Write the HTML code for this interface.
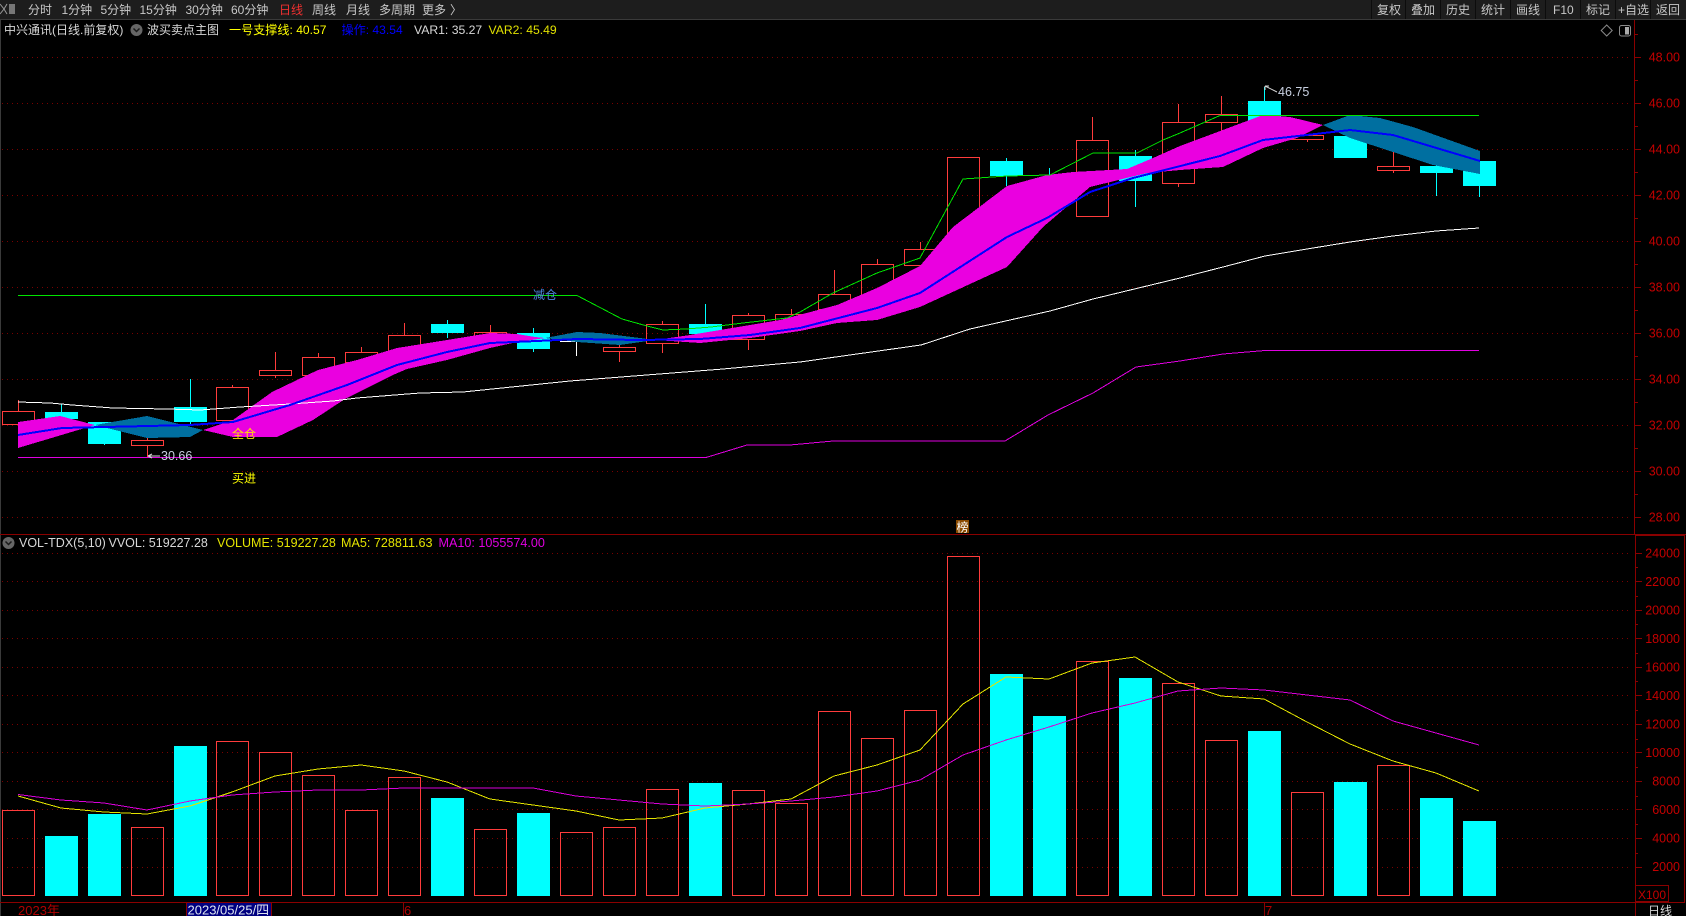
<!DOCTYPE html>
<html lang="zh">
<head>
<meta charset="utf-8">
<title>中兴通讯 日线</title>
<style>
html,body{margin:0;padding:0;background:#000;width:1686px;height:916px;overflow:hidden}
svg{display:block;position:absolute;left:0;top:0}
text{font-family:"Liberation Sans","Noto Sans CJK SC",sans-serif;font-size:12.5px;white-space:pre}
.m text{font-size:12px;fill:#c8c8c8}
.a text{fill:#c40000;text-anchor:end;font-size:12.5px}
</style>
</head>
<body>
<svg width="1686" height="916" viewBox="0 0 1686 916" xmlns="http://www.w3.org/2000/svg">
<rect width="1686" height="916" fill="#000"/>
<!-- top bar -->
<rect width="1686" height="19" fill="#1d1d1d"/>
<rect y="19" width="1686" height="1" fill="#3a3a3a"/>
<g shape-rendering="crispEdges" fill="#0c0c0c">
<rect x="1371" width="1" height="19"/><rect x="1405" width="1" height="19"/><rect x="1440" width="1" height="19"/><rect x="1475" width="1" height="19"/><rect x="1510" width="1" height="19"/><rect x="1545" width="1" height="19"/><rect x="1580" width="1" height="19"/><rect x="1615" width="1" height="19"/><rect x="1650" width="1" height="19"/>
</g>
<path d="M0 4l4 5-4 5M7 4l-3 5 3 5" fill="none" stroke="#999" stroke-width="1"/>
<rect x="9" y="4" width="6" height="10" fill="#777"/>
<g class="m">
<text x="28" y="14">分时</text>
<text x="61.500" y="14">1分钟</text>
<text x="100.500" y="14">5分钟</text>
<text x="139.500" y="14">15分钟</text>
<text x="185.500" y="14">30分钟</text>
<text x="231" y="14">60分钟</text>
<text x="279" y="14" style="fill:#f03030">日线</text>
<text x="312" y="14">周线</text>
<text x="346" y="14">月线</text>
<text x="379" y="14">多周期</text>
<text x="422" y="14">更多</text>
<text x="450" y="14">〉</text>
<text x="1377" y="14">复权</text>
<text x="1411" y="14">叠加</text>
<text x="1446" y="14">历史</text>
<text x="1481" y="14">统计</text>
<text x="1516" y="14">画线</text>
<text x="1553" y="14">F10</text>
<text x="1586" y="14">标记</text>
<text x="1618" y="14">+自选</text>
<text x="1656" y="14">返回</text>
</g>
<rect x="0" y="20" width="1" height="896" fill="#3a3a3a"/>

<!-- grid -->
<path shape-rendering="crispEdges" fill="none" stroke="#7a0000" stroke-dasharray="1 4" d="M2 57.5H1632M2 103.5H1632M2 149.5H1632M2 195.5H1632M2 241.5H1632M2 287.5H1632M2 333.5H1632M2 379.5H1632M2 425.5H1632M2 471.5H1632M2 517.5H1632M2 553.5H1632M2 581.5H1632M2 610.5H1632M2 638.5H1632M2 667.5H1632M2 695.5H1632M2 724.5H1632M2 752.5H1632M2 781.5H1632M2 809.5H1632M2 838.5H1632M2 867.5H1632"/>

<!-- frames and axes -->
<g shape-rendering="crispEdges" fill="#8a0000">
<rect x="1634" y="20" width="1" height="514"/>
<rect x="1635" y="534" width="1" height="368"/>
<rect x="0" y="534" width="1686" height="1"/>
<rect x="1635" y="535" width="50" height="1"/>
<rect x="1684" y="534" width="1" height="368"/>
<rect x="0" y="902" width="1685" height="1"/>
<rect x="186" y="903" width="1" height="13"/>
<rect x="271" y="903" width="1" height="13"/>
<rect x="403" y="903" width="1" height="13"/>
<rect x="1264" y="903" width="1" height="13"/>
<rect x="1635" y="903" width="1" height="13"/>
</g>
<path shape-rendering="crispEdges" fill="none" stroke="#8a0000" d="M1635 57.5h6M1635 103.5h6M1635 149.5h6M1635 195.5h6M1635 241.5h6M1635 287.5h6M1635 333.5h6M1635 379.5h6M1635 425.5h6M1635 471.5h6M1635 517.5h6M1635 34.5h3M1635 80.5h3M1635 126.5h3M1635 172.5h3M1635 218.5h3M1635 264.5h3M1635 310.5h3M1635 356.5h3M1635 402.5h3M1635 448.5h3M1635 494.5h3M1636 553.5h6M1636 581.5h6M1636 610.5h6M1636 638.5h6M1636 667.5h6M1636 695.5h6M1636 724.5h6M1636 752.5h6M1636 781.5h6M1636 809.5h6M1636 838.5h6M1636 867.5h6M1636 567.5h2M1636 596.5h2M1636 624.5h2M1636 653.5h2M1636 681.5h2M1636 710.5h2M1636 739.5h2M1636 767.5h2M1636 796.5h2M1636 824.5h2M1636 853.5h2"/>
<g class="a">
<text x="1680" y="61.5">48.00</text>
<text x="1680" y="107.5">46.00</text>
<text x="1680" y="153.5">44.00</text>
<text x="1680" y="199.5">42.00</text>
<text x="1680" y="245.5">40.00</text>
<text x="1680" y="291.5">38.00</text>
<text x="1680" y="337.5">36.00</text>
<text x="1680" y="383.5">34.00</text>
<text x="1680" y="429.5">32.00</text>
<text x="1680" y="475.5">30.00</text>
<text x="1680" y="521.5">28.00</text>
<text x="1680" y="557.5">24000</text>
<text x="1680" y="586">22000</text>
<text x="1680" y="614.5">20000</text>
<text x="1680" y="643">18000</text>
<text x="1680" y="671.5">16000</text>
<text x="1680" y="700">14000</text>
<text x="1680" y="728.5">12000</text>
<text x="1680" y="757">10000</text>
<text x="1680" y="785.5">8000</text>
<text x="1680" y="814">6000</text>
<text x="1680" y="842.5">4000</text>
<text x="1680" y="871">2000</text>
</g>

<!-- price candles: hollow red -->
<path shape-rendering="crispEdges" fill="none" stroke="#ff3c3c" d="
M2.5 411.5h32V424.5h-32zM18.5 400V411
M131.5 440.5h32V445.5h-32zM147.5 438V440M147.5 446V457
M216.5 387.5h32V420.5h-32zM232.5 385V387
M259.5 370.5h32V375.5h-32zM275.5 352V370M275.5 376V378
M302.5 357.5h32V375.5h-32zM318.5 353V357
M345.5 352.5h32V362.5h-32zM361.5 347V352
M388.5 335.5h32V352.5h-32zM404.5 323V335
M474.5 332.5h32V338.5h-32zM490.5 325V332
M603.5 347.5h32V351.5h-32zM619.5 345V347M619.5 352V362
M646.5 324.5h32V343.5h-32zM662.5 321V324M662.5 344V353
M732.5 315.5h32V339.5h-32zM748.5 313V315M748.5 340V350
M775.5 314.5h32V326.5h-32zM791.5 309V314
M818.5 294.5h32V309.5h-32zM834.5 270V294
M861.5 264.5h32V295.5h-32zM877.5 259V264
M904.5 249.5h32V265.5h-32zM920.5 242V249
M947.5 157.5h32V237.5h-32z
M1076.5 140.5h32V216.5h-32zM1092.5 117V140
M1162.5 122.5h32V183.5h-32zM1178.5 104V122M1178.5 184V187
M1205.5 114.5h32V122.5h-32zM1221.5 96V114M1221.5 123V133
M1291.5 135.5h32V139.5h-32zM1307.5 140V142
M1377.5 166.5h32V170.5h-32zM1393.5 152V166M1393.5 171V173"/>
<!-- price candles: cyan -->
<g shape-rendering="crispEdges" fill="#00ffff">
<rect x="45" y="412" width="33" height="7"/><rect x="61" y="404" width="1" height="8"/>
<rect x="88" y="422" width="33" height="22"/><rect x="104" y="444" width="1" height="1"/>
<rect x="174" y="407" width="33" height="15"/><rect x="190" y="379" width="1" height="45"/>
<rect x="431" y="324" width="33" height="9"/><rect x="447" y="320" width="1" height="18"/>
<rect x="517" y="333" width="33" height="16"/><rect x="533" y="328" width="1" height="24"/>
<rect x="689" y="324" width="33" height="10"/><rect x="705" y="304" width="1" height="20"/>
<rect x="990" y="161" width="33" height="15"/><rect x="1006" y="158" width="1" height="28"/>
<rect x="1049" y="168" width="1" height="14"/>
<rect x="1119" y="156" width="33" height="25"/><rect x="1135" y="150" width="1" height="57"/>
<rect x="1248" y="101" width="33" height="21"/><rect x="1264" y="87" width="1" height="14"/>
<rect x="1334" y="136" width="33" height="22"/><rect x="1350" y="128" width="1" height="8"/>
<rect x="1420" y="166" width="33" height="7"/><rect x="1436" y="163" width="1" height="33"/>
<rect x="1463" y="161" width="33" height="25"/><rect x="1479" y="186" width="1" height="11"/>
</g>
<path shape-rendering="crispEdges" fill="none" stroke="#fff" d="M560 341.5h33M576.5 337V356"/>

<!-- ribbon -->
<g shape-rendering="crispEdges">
<polygon fill="#ea00e0" points="18,422 60,416 95,425 18,448"/>
<polygon fill="#006fa0" points="95,425 147,416 203,430 190,437 147,438"/>
<polygon fill="#ea00e0" points="203,430 233,420 272,392 318,370 357,360 397,348 447,340 490,333 517,334 535,337 545,338 517,342 490,348 447,360 407,369 393,375 345,399 313,420 277,437 233,437"/>
<polygon fill="#006fa0" points="545,338 577,332 600,333 640,338 655,340 620,345 577,342"/>
<polygon fill="#ea00e0" points="655,340 690,335 720,330 780,320 837,305 877,288 920,266 953,227 1007,186 1047,175 1073,172 1127,169 1153,158 1180,146 1263,115 1290,117 1323,125 1297,138 1263,148 1223,167 1180,170 1147,173 1090,187 1043,227 1007,267 920,307 877,320 837,323 800,331 750,338 700,343"/>
<polygon fill="#006fa0" points="1323,125 1350,115 1380,118 1413,127 1480,151 1480,174 1433,165 1393,152 1350,138"/>
</g>

<!-- price lines -->
<g fill="none" shape-rendering="crispEdges">
<polyline stroke="#ffffff" points="18,402 50,403 72,405 113,408 167,409 200,410 240,407 290,404 333,401 357,398 420,393 463,392 570,381 723,369 800,362 921,345 970,329 1050,311 1093,299 1180,278 1223,267 1265,256 1307,249 1350,242 1393,236 1436,231 1479,228"/>
<polyline stroke="#e000e0" points="18,457.5 706,457.5 747,445 790,445 833,441 1005,441 1048,415 1093,393 1136,367 1180,361 1223,354 1265,350.5 1479,350.5"/>
<polyline stroke="#00e400" points="18,295.5 577,295.5 622,319 647,326 663,330 686,329 711,327 743,323 787,318 800,312 833,293 877,273 920,258 963,179 1007,176 1050,175 1093,153 1137,153 1163,140 1180,133 1220,115.5 1479,115.5"/>
<polyline stroke="#0000ff" stroke-width="2" points="18,435 62,428 105,427 148,426 190,425 233,422 290,405 347,385 397,365 447,352 490,343 537,341 577,339 640,340 700,339 750,335 800,328 877,308 920,293 1007,237 1047,218 1090,192 1133,178 1220,156 1263,140 1350,130 1393,135 1480,161"/>
</g>

<!-- chart annotations -->
<text x="533" y="299" style="fill:#4f86e0;font-size:12px">减仓</text>
<text x="232" y="438" style="fill:#ffe000;font-size:12px">全仓</text>
<text x="232" y="482.5" style="fill:#ffff00;font-size:12px">买进</text>
<path d="M148 456H160M148 456l4-2M148 456l4 2" fill="none" stroke="#d8d8d8"/>
<text x="161" y="460" style="fill:#c8d0e0">30.66</text>
<path d="M1265 86L1277 92M1265 86h4M1265 86v4" fill="none" stroke="#d8d8d8"/>
<text x="1278" y="96" style="fill:#c8d0e0">46.75</text>
<rect x="956" y="520" width="13" height="13" fill="#8a4a00"/>
<text x="956.5" y="531.5" style="fill:#fff;font-size:12px">榜</text>

<!-- price header -->
<text x="4" y="34" style="fill:#d8d8d8;font-size:12px">中兴通讯(日线.前复权)</text>
<circle cx="136.500" cy="30" r="6" fill="#666"/>
<path d="M133.500 28.500l3 3 3-3" fill="none" stroke="#1a1a1a" stroke-width="1.500"/>
<text x="147" y="34" style="fill:#d8d8d8;font-size:12px">波买卖点主图</text>
<text x="229" y="34" style="fill:#ffff00;font-size:12.1px">一号支撑线: 40.57</text>
<text x="341.500" y="34" style="fill:#0000ff;font-size:12.1px">操作: 43.54</text>
<text x="414" y="34" style="fill:#d8d8d8;font-size:12.2px">VAR1: 35.27</text>
<text x="488.500" y="34" style="fill:#e0e000;font-size:12.2px">VAR2: 45.49</text>
<path d="M1606.700 25l5.500 5.500-5.500 5.500-5.500-5.500z" fill="none" stroke="#8a8a8a"/>
<rect x="1619.500" y="25.500" width="11" height="10.500" rx="2" fill="none" stroke="#8a8a8a"/>
<rect x="1625" y="27" width="4" height="7.500" fill="#aaa"/>

<!-- volume bars -->
<path shape-rendering="crispEdges" fill="none" stroke="#ff3c3c" d="
M2.500 810.500h32V895.500h-32z
M131.500 827.500h32V895.500h-32z
M216.500 741.500h32V895.500h-32z
M259.500 752.500h32V895.500h-32z
M302.500 775.500h32V895.500h-32z
M345.500 810.500h32V895.500h-32z
M388.500 777.500h32V895.500h-32z
M474.500 829.500h32V895.500h-32z
M560.500 832.500h32V895.500h-32z
M603.500 827.500h32V895.500h-32z
M646.500 789.500h32V895.500h-32z
M732.500 790.500h32V895.500h-32z
M775.500 803.500h32V895.500h-32z
M818.500 711.500h32V895.500h-32z
M861.500 738.500h32V895.500h-32z
M904.500 710.500h32V895.500h-32z
M947.500 556.500h32V895.500h-32z
M1076.500 661.500h32V895.500h-32z
M1162.500 683.500h32V895.500h-32z
M1205.500 740.500h32V895.500h-32z
M1291.500 792.500h32V895.500h-32z
M1377.500 765.500h32V895.500h-32z"/>
<g shape-rendering="crispEdges" fill="#00ffff">
<rect x="45" y="836" width="33" height="60"/>
<rect x="88" y="814" width="33" height="82"/>
<rect x="174" y="746" width="33" height="150"/>
<rect x="431" y="798" width="33" height="98"/>
<rect x="517" y="813" width="33" height="83"/>
<rect x="689" y="783" width="33" height="113"/>
<rect x="990" y="674" width="33" height="222"/>
<rect x="1033" y="716" width="33" height="180"/>
<rect x="1119" y="678" width="33" height="218"/>
<rect x="1248" y="731" width="33" height="165"/>
<rect x="1334" y="782" width="33" height="114"/>
<rect x="1420" y="798" width="33" height="98"/>
<rect x="1463" y="821" width="33" height="75"/>
</g>
<g fill="none" shape-rendering="crispEdges">
<polyline stroke="#e4e400" points="18,796 61,808 104,812 147,814 190,806 232,792 275,776 318,769 361,765 404,771 447,782 490,799 533,805 576,811 619,820 662,818 705,808 748,804 791,799 834,776 877,765 920,750 963,704 1006,677 1049,679 1092,663 1135,657 1178,682 1221,696 1264,699 1307,722 1350,744 1393,761 1436,773 1479,791"/>
<polyline stroke="#d800d8" points="18,794.500 61,800 104,803 147,810 190,801 232,795 275,792 318,790 361,790 404,788 447,788 490,788 533,788 576,796 619,800 662,804 705,806 748,804 791,801 834,797 877,791 920,780 963,755 1006,740 1049,727 1092,713 1135,703 1178,691 1221,688 1264,690 1307,695 1350,700 1393,721 1436,733 1479,745"/>
</g>

<!-- volume header -->
<circle cx="8.500" cy="543" r="6" fill="#666"/>
<path d="M5.500 541.500l3 3 3-3" fill="none" stroke="#1a1a1a" stroke-width="1.500"/>
<text x="19" y="547" style="fill:#d8d8d8">VOL-TDX(5,10)</text>
<text x="108.500" y="547" style="fill:#d8d8d8">VVOL: 519227.28</text>
<text x="217" y="547" style="fill:#e4e400">VOLUME: 519227.28</text>
<text x="341" y="547" style="fill:#e4e400;font-size:12.6px">MA5: 728811.63</text>
<text x="438.500" y="547" style="fill:#e000e0;font-size:12.6px">MA10: 1055574.00</text>

<!-- x100 box and footer -->
<rect x="1635.500" y="885.500" width="33" height="16" fill="none" stroke="#8a0000" shape-rendering="crispEdges"/>
<text x="1638" y="899" style="fill:#c40000;font-size:12px">X100</text>
<text x="18" y="915" style="fill:#b00000;font-size:13px">2023年</text>
<rect x="187" y="903" width="84" height="13" fill="#000080"/>
<text x="187.500" y="914.500" style="fill:#dde4f0;font-size:13px">2023/05/25/四</text>
<text x="404" y="915" style="fill:#b00000;font-size:13px">6</text>
<text x="1265" y="915" style="fill:#b00000;font-size:13px">7</text>
<text x="1648" y="915" style="fill:#d8d8d8;font-size:12px">日线</text>
</svg>
</body>
</html>
